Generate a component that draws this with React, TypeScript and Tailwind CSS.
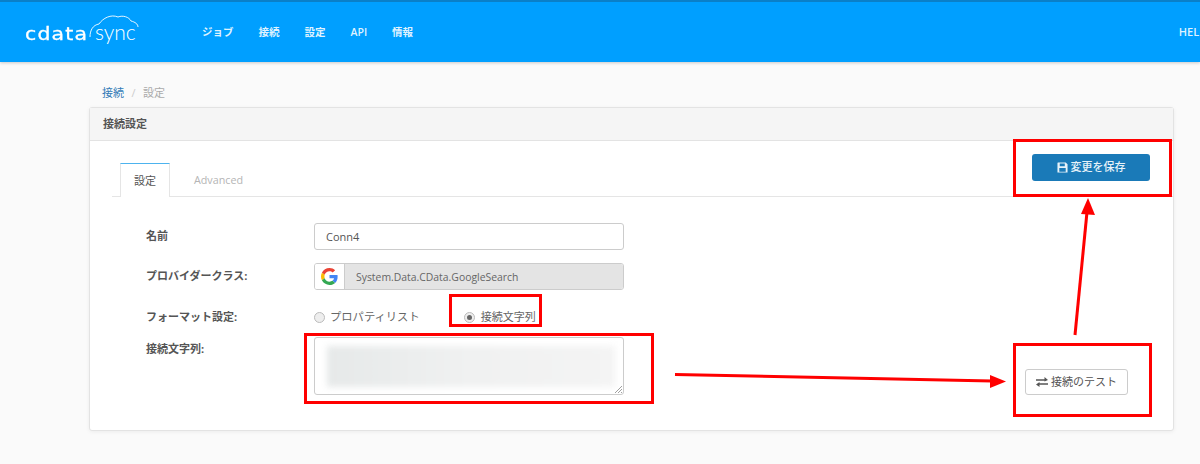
const FONT = "font-['Open_Sans','Noto_Sans_CJK_JP',sans-serif]"
const NAV = ['ジョブ', '接続', '設定', 'API', '情報']

function Logo() {
  return (
    <div className="relative flex items-baseline w-[112px] h-[30px] text-white">
      <span className="inline-block w-[70px] font-['DejaVu_Sans',sans-serif] text-[17px] leading-[30px] tracking-[1px] scale-x-[1.2] origin-left [-webkit-text-stroke:0.3px_white]">cdata</span>
      <span className="font-['Lato',sans-serif] font-light text-[21px] leading-[30px]">sync</span>
      <svg className="absolute left-[63px] top-[-3px] overflow-visible" width="52" height="26" viewBox="0 0 52 26" fill="none" stroke="white" strokeWidth="0.9">
        <path d="M2 23 C2 16 5 11 11 10 C15 4 23 0 30 3 C35 1 41 3 43 7 C47 8 50 10 50 13" />
      </svg>
    </div>
  )
}

function GoogleG() {
  return (
    <svg width="17" height="17" viewBox="0 0 48 48">
      <path fill="#EA4335" d="M24 9.500c3.500 0 6.700 1.300 9.100 3.500l6.800-6.800C35.800 2.400 30.300 0 24 0 14.600 0 6.500 5.400 2.600 13.200l7.900 6.100C12.400 13.600 17.700 9.500 24 9.500z" />
      <path fill="#4285F4" d="M46.900 24.500c0-1.600-.1-3.100-.4-4.500H24v9h12.900c-.6 3-2.200 5.500-4.700 7.200l7.700 6c4.500-4.200 7-10.300 7-17.700z" />
      <path fill="#FBBC05" d="M10.500 28.700c-.5-1.400-.8-3-.8-4.700s.3-3.300.8-4.700l-7.900-6.100C.9 16.500 0 20.100 0 24s.9 7.500 2.600 10.800l7.900-6.100z" />
      <path fill="#34A853" d="M24 48c6.500 0 11.900-2.100 15.900-5.800l-7.700-6c-2.200 1.500-4.900 2.300-8.200 2.300-6.300 0-11.600-4.100-13.500-9.800l-7.900 6.100C6.500 42.600 14.600 48 24 48z" />
    </svg>
  )
}

function FloppyIcon() {
  return (
    <svg width="11" height="11" viewBox="0 0 12 12" fill="currentColor">
      <path fillRule="evenodd" d="M1 0.500 H9.500 L11.500 2.500 V11.500 H0.500 V1 Z M3 1.500 V4.500 H8.500 V1.500 Z M2.500 6.500 V10.500 H9.500 V6.500 Z" />
    </svg>
  )
}

function ExchangeIcon() {
  return (
    <svg width="12" height="10" viewBox="0 0 12 10" fill="currentColor">
      <path d="M0 2.200 H8.500 V0 L12 3 L8.500 4.400 V3.700 H0 Z" />
      <path d="M12 6.300 H3.500 V5 L0 7.500 L3.500 10 V7.800 H12 Z" />
    </svg>
  )
}

function Row({ label, className, labelClass = '', children }: { label: string; className: string; labelClass?: string; children: React.ReactNode }) {
  return (
    <div className={`flex ${className}`}>
      <label className={`w-[168px] shrink-0 text-[11px] font-bold text-[#555] ${labelClass}`}>{label}</label>
      {children}
    </div>
  )
}

export default function App() {
  return (
    <div className={`relative h-[464px] overflow-hidden bg-[#fafafa] ${FONT}`}>
      {/* ヘッダー */}
      <header className="flex items-center h-[62px] bg-[#009fff] border-t-2 border-[#0a7fc8] shadow-[0_1px_3px_rgba(0,0,0,0.2)] pl-[25px] text-white">
        <Logo />
        <nav className="flex gap-[25px] ml-[65px] pt-px text-[10.500px] font-semibold text-[#dff2ff]">
          {NAV.map(n => (
            <a key={n}>{n}</a>
          ))}
        </nav>
        <span className="ml-auto mr-[-6px] pt-px text-[11px] font-semibold text-[#dff2ff]">HELP</span>
      </header>

      <main className="pl-[89px] w-[1174px]">
        <div className="pl-[13px] pt-[23px] h-[45px] text-[11px] leading-[15px] text-[#aaa]">
          <span className="text-[#337ab7]">接続</span>
          <span className="mx-[7.500px] text-[#ccc]">/</span>
          <span>設定</span>
        </div>

        <section className="bg-white border border-[#e3e3e3] rounded-[3px] shadow-[0_1px_4px_rgba(0,0,0,0.06)] h-[324px]">
          <div className="h-[33px] bg-[#f5f5f5] border-b border-[#e3e3e3] pl-[13px] text-[11px] font-bold leading-[32px] text-[#555]">
            接続設定
          </div>

          {/* タブ */}
          <div className="flex items-end justify-between h-[56px] ml-[22px] border-b border-[#e5e5e5]">
            <div className="flex h-[34px] -mb-px text-[11px] ml-[8px]">
              <div className="w-[50px] bg-white border-x border-t border-x-[#e5e5e5] border-t-[#4db3ee] text-center leading-[33px] text-[#555]">設定</div>
              <div className="ml-[24px] text-[10.750px] leading-[35px] text-[#b5b5b5]">Advanced</div>
            </div>
            <button className="flex items-center justify-center gap-[3px] self-start mt-[13px] mr-[23px] w-[118px] h-[27px] rounded-[3px] bg-[#1a7ab8] text-[11px] font-medium text-[#e6f2f9]">
              <FloppyIcon />
              変更を保存
            </button>
          </div>

          {/* フォーム */}
          <div className="flex justify-between">
            <div className="pl-[56px] pt-[26px]">
              <Row label="名前" className="items-center">
                <input readOnly value="Conn4" className="w-[310px] h-[27px] px-[11px] bg-white border border-[#ccc] rounded-[3px] text-[11px] text-[#555]" />
              </Row>
              <Row label="プロバイダークラス:" className="items-center mt-[13px]">
                <div className="flex w-[310px] h-[27px] border border-[#ccc] rounded-[3px] overflow-hidden">
                  <div className="flex items-center justify-center w-[30px] bg-white border-r border-[#ccc]"><GoogleG /></div>
                  <div className="flex-1 bg-[#e4e4e4] pl-[11px] text-[10.400px] leading-[26px] text-[#666]">System.Data.CData.GoogleSearch</div>
                </div>
              </Row>
              <Row label="フォーマット設定:" className="items-center mt-[18px] h-[18px]">
                <div className="flex items-center text-[#666]">
                  <span className="w-[11px] h-[11px] rounded-full border border-[#bbb] bg-[#eee]" />
                  <span className="ml-[5px] text-[11.300px]">プロパティリスト</span>
                  <span className="flex items-center justify-center ml-[44px] w-[11px] h-[11px] rounded-full border border-[#bbb] bg-[#eee]">
                    <span className="w-[5px] h-[5px] rounded-full bg-[#666]" />
                  </span>
                  <span className="ml-[6px] text-[11px]">接続文字列</span>
                </div>
              </Row>
              <Row label="接続文字列:" className="mt-[11px]" labelClass="pt-[4px]">
                <div className="relative w-[310px] h-[58px] bg-white border border-[#ccc] rounded-[3px] overflow-hidden">
                  <div className="absolute left-[12px] top-[8px] w-[288px] h-[41px] bg-linear-to-r from-[#e6e9e9] via-[#f0f1f1] to-[#f4f4f4] blur-[3px]" />
                  <svg className="absolute right-0 bottom-0" width="9" height="9" viewBox="0 0 9 9" stroke="#888" strokeWidth="0.8">
                    <path d="M1 8 L8 1 M4 8 L8 4 M7 8 L8 7" />
                  </svg>
                </div>
              </Row>
            </div>
            <button className="flex items-center justify-center gap-[3px] self-end mr-[45px] w-[103px] h-[26px] bg-white border border-[#ccc] rounded-[3px] text-[11px] text-[#555]">
              <ExchangeIcon />
              接続のテスト
            </button>
          </div>
        </section>
      </main>

      {/* 赤い注釈 */}
      <div className="absolute left-[1013px] top-[139px] w-[159px] h-[58px] border-[3px] border-[#f00]" />
      <div className="absolute left-[449px] top-[294px] w-[93px] h-[33px] border-[3px] border-[#f00]" />
      <div className="absolute left-[304px] top-[333px] w-[350px] h-[71px] border-[3px] border-[#f00]" />
      <div className="absolute left-[1013px] top-[343px] w-[139px] h-[74px] border-[3px] border-[#f00]" />
      <svg className="absolute left-0 top-0" width="1200" height="464">
        <path d="M675 374.500 L992 381" stroke="#f00" strokeWidth="3" />
        <path d="M990 375 L1006 381.500 L990 388 Z" fill="#f00" />
        <path d="M1075 335 L1087 212" stroke="#f00" strokeWidth="3" />
        <path d="M1081 214 L1088 198 L1095 215 Z" fill="#f00" />
      </svg>
    </div>
  )
}
